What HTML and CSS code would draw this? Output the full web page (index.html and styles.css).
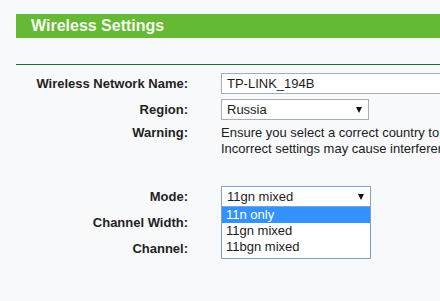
FILE: index.html
```html
<!DOCTYPE html>
<html lang="en">
<head>
    <meta charset="UTF-8">
    <meta name="viewport" content="width=device-width, initial-scale=1.0">
    <title>Wireless Settings</title>
    <link rel="stylesheet" href="styles.css">
</head>
<body>
    <div class="page">
        <div class="title-bar">Wireless Settings</div>
        <div class="divider"></div>

        <div class="form">
            <div class="label">Wireless Network Name:</div>
            <div class="field text-input">TP-LINK_194B</div>

            <div class="label">Region:</div>
            <div class="field select region-select">
                <span>Russia</span>
                <i class="arrow"></i>
            </div>

            <div class="label warning-label">Warning:</div>
            <div class="warning-text">
                Ensure you select a correct country to conform local law.<br>
                Incorrect settings may cause interference.
            </div>

            <div class="spacer"></div>
            <div class="spacer"></div>

            <div class="label">Mode:</div>
            <div class="select-wrap">
                <div class="field select mode-select">
                    <span>11gn mixed</span>
                    <i class="arrow"></i>
                </div>
                <ul class="dropdown">
                    <li class="active">11n only</li>
                    <li>11gn mixed</li>
                    <li>11bgn mixed</li>
                </ul>
            </div>

            <!-- these two are covered by the open dropdown -->
            <div class="label">Channel Width:</div>
            <div class="field select short-select"></div>

            <div class="label">Channel:</div>
            <div class="field select short-select"></div>
        </div>
    </div>
</body>
</html>
```

FILE: styles.css
```css
body {
    margin: 0;
    background-color: #f8f9fa;
    font-family: "Liberation Sans", Arial, sans-serif;
    font-size: 13px;
    color: #1c1c1c;
    overflow: hidden;
}

.page {
    padding: 14px 0 0 16px;
}

.title-bar {
    height: 24px;
    line-height: 24px;
    padding-left: 15px;
    background-color: #66b935;
    color: #f6fbef;
    font-size: 16px;
    font-weight: bold;
    white-space: nowrap;
}

.divider {
    margin-top: 26px;
    height: 1px;
    background-color: #22683a;
}

.form {
    display: grid;
    grid-template-columns: 172px 1fr;
    column-gap: 33px;
    row-gap: 5px;
    margin-top: 8px;
}

.label {
    align-self: center;
    text-align: right;
    font-weight: bold;
    white-space: nowrap;
    color: #1f1f1f;
}

.warning-label {
    align-self: start;
    line-height: 16px;
}

.warning-text {
    line-height: 16px;
    white-space: nowrap;
    color: #1a1a1a;
}

.spacer {
    height: 19px;
}

.field {
    box-sizing: border-box;
    height: 21px;
    line-height: 19px;
    padding-left: 5px;
    border: 1px solid #a7adb6;
    background-color: #fff;
    white-space: nowrap;
}

.text-input {
    width: 260px;
}

.select {
    display: flex;
    justify-content: space-between;
    align-items: center;
    padding-right: 6px;
}

.region-select {
    width: 148px;
}

.short-select {
    width: 150px;
}

.arrow {
    width: 0;
    height: 0;
    border-left: 3px solid transparent;
    border-right: 3px solid transparent;
    border-top: 6px solid #111;
}

.select-wrap {
    position: relative;
    width: 150px;
}

.mode-select {
    border-color: #7fa3d6;
}

.dropdown {
    position: absolute;
    top: 21px;
    left: 0;
    z-index: 2;
    box-sizing: border-box;
    width: 150px;
    margin: 0;
    padding: 0 0 3px;
    list-style: none;
    background-color: #fff;
    border: 1px solid #7f9cc9;
    border-top: none;
}

.dropdown li {
    height: 16px;
    line-height: 16px;
    padding-left: 4px;
    white-space: nowrap;
}

.dropdown li.active {
    background-color: #3392fb;
    color: #fff;
}
```
